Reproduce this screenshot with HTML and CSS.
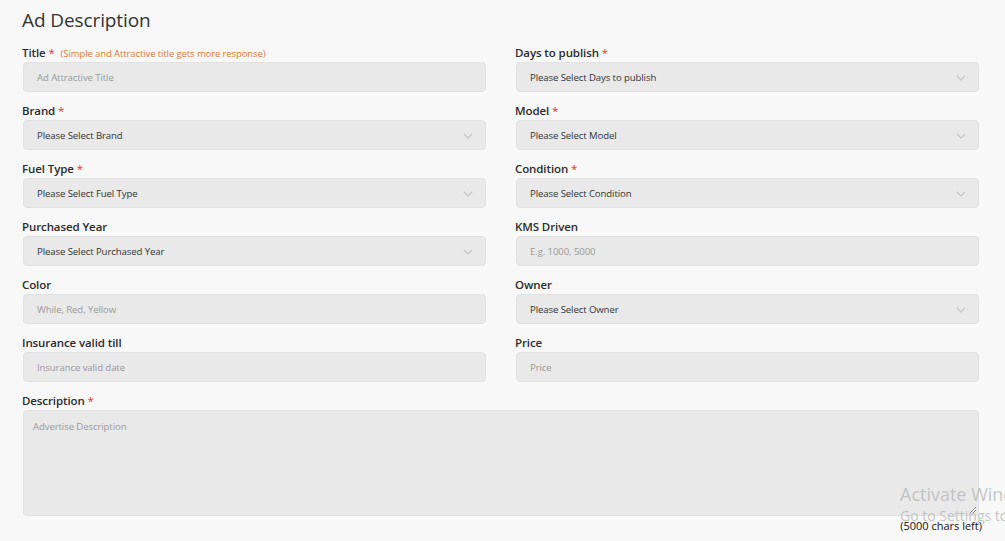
FILE: index.html
```html
<!DOCTYPE html>
<html lang="en">
<head>
<meta charset="utf-8">
<title>Ad Description</title>
<link rel="stylesheet" href="styles.css">
</head>
<body>
<div class="page">
  <h2 class="heading">Ad Description</h2>
  <div class="grid">
    <div class="field">
      <label class="label">Title <span class="req">*</span> <span class="hint">(Simple and Attractive title gets more response)</span></label>
      <div class="input placeholder">Ad Attractive Title</div>
    </div>
    <div class="field">
      <label class="label">Days to publish <span class="req">*</span></label>
      <div class="input select">Please Select Days to publish<svg class="chev" viewBox="0 0 10 6"><path d="M1 1l4 4 4-4"/></svg></div>
    </div>
    <div class="field">
      <label class="label">Brand <span class="req">*</span></label>
      <div class="input select">Please Select Brand<svg class="chev" viewBox="0 0 10 6"><path d="M1 1l4 4 4-4"/></svg></div>
    </div>
    <div class="field">
      <label class="label">Model <span class="req">*</span></label>
      <div class="input select">Please Select Model<svg class="chev" viewBox="0 0 10 6"><path d="M1 1l4 4 4-4"/></svg></div>
    </div>
    <div class="field">
      <label class="label">Fuel Type <span class="req">*</span></label>
      <div class="input select">Please Select Fuel Type<svg class="chev" viewBox="0 0 10 6"><path d="M1 1l4 4 4-4"/></svg></div>
    </div>
    <div class="field">
      <label class="label">Condition <span class="req">*</span></label>
      <div class="input select">Please Select Condition<svg class="chev" viewBox="0 0 10 6"><path d="M1 1l4 4 4-4"/></svg></div>
    </div>
    <div class="field">
      <label class="label">Purchased Year</label>
      <div class="input select">Please Select Purchased Year<svg class="chev" viewBox="0 0 10 6"><path d="M1 1l4 4 4-4"/></svg></div>
    </div>
    <div class="field">
      <label class="label">KMS Driven</label>
      <div class="input placeholder">E.g. 1000, 5000</div>
    </div>
    <div class="field">
      <label class="label">Color</label>
      <div class="input placeholder">While, Red, Yellow</div>
    </div>
    <div class="field">
      <label class="label">Owner</label>
      <div class="input select">Please Select Owner<svg class="chev" viewBox="0 0 10 6"><path d="M1 1l4 4 4-4"/></svg></div>
    </div>
    <div class="field">
      <label class="label">Insurance valid till</label>
      <div class="input placeholder">Insurance valid date</div>
    </div>
    <div class="field">
      <label class="label">Price</label>
      <div class="input placeholder">Price</div>
    </div>
    <div class="field wide">
      <label class="label">Description <span class="req">*</span></label>
      <div class="textarea placeholder">Advertise Description<svg class="grip" viewBox="0 0 8 8"><path d="M7 1L1 7M7 4L4 7"/></svg></div>
      <div class="chars">(5000 chars left)</div>
    </div>
  </div>
</div>
<div class="watermark">
  <div class="wm-title">Activate Windows</div>
  <div class="wm-sub">Go to Settings to activate Windows.</div>
</div>
</body>
</html>
```

FILE: styles.css
```css
html, body {
  margin: 0;
  padding: 0;
  background: #f8f8f8;
  overflow: hidden;
}
body {
  font-family: "Open Sans", "Noto Sans", "Liberation Sans", sans-serif;
  color: #333;
  width: 1005px;
  height: 541px;
  position: relative;
}
.page {
  padding: 6px 26px 0 22px;
}
.heading {
  margin: 0;
  font-size: 19px;
  font-weight: 400;
  line-height: 28px;
  color: #333;
  letter-spacing: -0.1px;
}
.grid {
  margin-top: 11px;
  display: grid;
  grid-template-columns: 464px 464px;
  column-gap: 29px;
  row-gap: 11px;
}
.field {
  display: flex;
  flex-direction: column;
}
.wide {
  grid-column: 1 / 3;
}
.label {
  font-size: 11.5px;
  font-weight: 600;
  line-height: 16px;
  height: 16px;
  margin-bottom: 1px;
  color: #2b2b2b;
  white-space: nowrap;
  letter-spacing: -0.1px;
}
.req {
  color: #e0303a;
  font-weight: 400;
}
.hint {
  font-size: 9.5px;
  font-weight: 400;
  color: #e07a2f;
  margin-left: 3px;
}
.input {
  box-sizing: border-box;
  height: 30px;
  margin-left: 1px;
  background: #e9e9e9;
  border: 1px solid #e2e2e2;
  border-radius: 4px;
  padding: 0 13px;
  display: flex;
  align-items: center;
  font-size: 9.6px;
  color: #333;
  position: relative;
  letter-spacing: -0.1px;
}
.placeholder {
  color: #9a9a9a;
}
.chev {
  position: absolute;
  right: 12px;
  top: 12px;
  width: 10px;
  height: 6px;
  fill: none;
  stroke: #c4c4c4;
  stroke-width: 1.1;
}
.textarea {
  box-sizing: border-box;
  height: 106px;
  margin-left: 1px;
  background: #e9e9e9;
  border: 1px solid #e2e2e2;
  border-radius: 4px;
  padding: 9px 9px;
  font-size: 9.6px;
  line-height: 14px;
  position: relative;
  letter-spacing: -0.1px;
}
.grip {
  position: absolute;
  right: 1px;
  bottom: 1px;
  width: 8px;
  height: 8px;
  fill: none;
  stroke: #777;
  stroke-width: 0.8;
}
.chars {
  align-self: flex-end;
  font-size: 11px;
  line-height: 14px;
  margin-top: 3px;
  margin-right: -3px;
  color: #111;
}
.watermark {
  position: absolute;
  left: 900px;
  right: 0;
  top: 482px;
  overflow: hidden;
  white-space: nowrap;
  color: rgba(180, 180, 180, 0.75);
  pointer-events: none;
}
.wm-title {
  font-size: 18px;
  line-height: 24px;
}
.wm-sub {
  font-size: 14px;
  line-height: 20px;
}
```
